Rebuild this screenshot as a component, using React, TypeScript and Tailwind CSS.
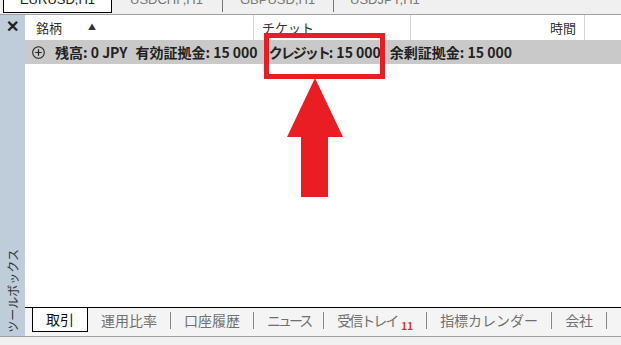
import React from 'react'

const font = { fontFamily: '"Noto Sans CJK JP", "Liberation Sans", sans-serif' }

const bottomTabs = [
  { label: '運用比率', cls: '' },
  { label: '口座履歴', cls: '' },
  { label: 'ニュース', cls: 'tracking-[-3px]' },
  { label: '受信トレイ', cls: 'tracking-[-2px]' },
  { label: '指標カレンダー', cls: '' },
  { label: '会社', cls: '' },
  { label: 'アラート', cls: '' },
]

export default function App() {
  return (
    <div
      className="relative w-[621px] h-[345px] overflow-hidden bg-[#f0f0f0] flex flex-col text-[#222]"
      style={font}
    >
      {/* top chart tabs (cut off) */}
      <div className="h-[15px] border-b border-[#a0a0a0] flex items-start overflow-hidden shrink-0">
        <div className="ml-[3px] w-[109px] h-[13px] bg-white border-x border-b border-black flex justify-center overflow-hidden shrink-0">
          <span className="-mt-[9px] text-[13px] leading-[18px] font-['Liberation_Sans',sans-serif]">EURUSD,H1</span>
        </div>
        <div className="flex items-start h-[13px] overflow-hidden text-[#777] text-[13px] leading-[18px] font-['Liberation_Sans',sans-serif]">
          <span className="-mt-[9px] ml-[18px] w-[92px] shrink-0">USDCHF,H1</span>
          <span className="w-px h-[12px] bg-[#777] shrink-0" />
          <span className="-mt-[9px] ml-[17px] w-[93px] shrink-0">GBPUSD,H1</span>
          <span className="w-px h-[12px] bg-[#777] shrink-0" />
          <span className="-mt-[9px] ml-[16px] shrink-0">USDJPY,H1</span>
        </div>
      </div>

      <div className="flex flex-1 min-h-0">
        {/* toolbox side bar */}
        <div className="w-[25px] bg-[#bfcddb] flex flex-col items-center justify-between shrink-0">
          <span className="mt-[2px] text-[16px] font-bold leading-[20px] font-['Liberation_Sans',sans-serif]">✕</span>
          <span className="mb-[3px] text-[12px] leading-[14px] [writing-mode:vertical-rl] [text-orientation:sideways] rotate-180 text-[#333]">
            ツールボックス
          </span>
        </div>

        <div className="flex-1 flex flex-col bg-white min-w-0">
          {/* header */}
          <div className="h-[25px] flex text-[13px] text-[#333] shrink-0">
            <div className="w-[229px] border-r border-[#d5d5d5] flex items-center pl-[11px] shrink-0">
              <span>銘柄</span>
              <span className="ml-[26px] text-[8px] mt-[-2px]">▲</span>
            </div>
            <div className="w-[157px] border-r border-[#d5d5d5] flex items-center pl-[8px] shrink-0">チケット</div>
            <div className="w-[174px] border-r border-[#d5d5d5] flex items-center justify-end pr-[8px] shrink-0">時間</div>
            <div className="flex-1" />
          </div>

          {/* summary row */}
          <div className="h-[24px] bg-[#c9c9c9] flex items-center pl-[7px] text-[14px] font-semibold whitespace-nowrap shrink-0">
            <svg width="13" height="13" viewBox="0 0 13 13" className="shrink-0">
              <circle cx="6.5" cy="6.5" r="5.8" fill="none" stroke="#222" strokeWidth="1.1" />
              <path d="M6.5 3.3v6.4M3.3 6.5h6.4" stroke="#222" strokeWidth="1.2" />
            </svg>
            <span className="ml-[10px]">残高: 0 JPY</span>
            <span className="ml-[8px]">有効証拠金: 15 000</span>
            <span className="ml-[11px]">
              <span className="tracking-[-2px]">クレジット</span>: 15 000
            </span>
            <span className="ml-[9px]">余剰証拠金: 15 000</span>
          </div>

          <div className="flex-1" />

          {/* bottom tabs */}
          <div className="h-[29px] border-t border-black bg-[#f4f4f4] flex items-start text-[14px] shrink-0 overflow-hidden">
            <div className="ml-[7px] -mt-px w-[56px] h-[25px] bg-white border-x border-b border-black flex items-center justify-center text-[#111] shrink-0">
              取引
            </div>
            {bottomTabs.map((t, i) => (
              <div key={t.label} className="flex items-center h-[24px] text-[#707070] whitespace-nowrap shrink-0">
                {i > 0 && <span className="w-px h-[17px] bg-[#888]" />}
                <span className="px-[13px]">
                  <span className={t.cls}>{t.label}</span>
                  {t.label === '受信トレイ' && (
                    <span className="ml-[4px] text-[10px] font-bold text-[#e03030] relative top-[4px]">11</span>
                  )}
                </span>
              </div>
            ))}
          </div>
        </div>
      </div>

      <div className="h-[9px] border-t border-[#a0a0a0] shrink-0" />

      {/* red annotation box */}
      <div className="absolute left-[264px] top-[33px] w-[121px] h-[46px] border-[5px] border-[#ea1c24]" />

      {/* red arrow */}
      <svg className="absolute left-[286px] top-[78px]" width="58" height="120" viewBox="0 0 58 120">
        <path d="M29 0 L57 59 L42 59 L42 119 L15 119 L15 59 L1 59 Z" fill="#ea1c24" />
      </svg>
    </div>
  )
}
